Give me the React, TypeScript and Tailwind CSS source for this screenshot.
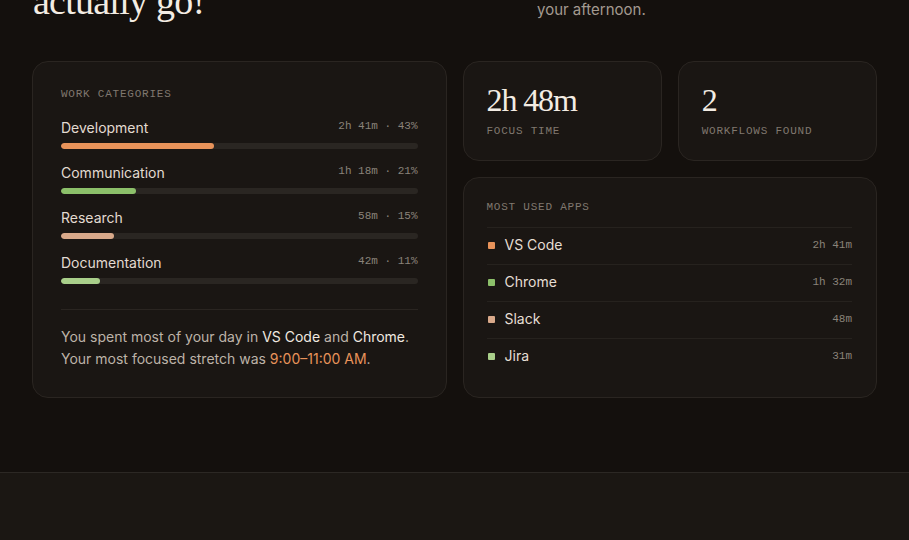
import React from "react";

const categories = [
  { name: "Development", time: "2h 41m · 43%", pct: 43, color: "bg-[#e8935a]" },
  { name: "Communication", time: "1h 18m · 21%", pct: 21, color: "bg-[#8cc06a]" },
  { name: "Research", time: "58m · 15%", pct: 15, color: "bg-[#d9a98a]" },
  { name: "Documentation", time: "42m · 11%", pct: 11, color: "bg-[#a9cf8a]" },
];

const apps = [
  { name: "VS Code", time: "2h 41m", color: "bg-[#e8935a]" },
  { name: "Chrome", time: "1h 32m", color: "bg-[#8cc06a]" },
  { name: "Slack", time: "48m", color: "bg-[#d9a98a]" },
  { name: "Jira", time: "31m", color: "bg-[#a9cf8a]" },
];

const sans = "font-['Inter','Noto_Sans',sans-serif]";
const mono = "font-['Liberation_Mono','DejaVu_Sans_Mono',monospace]";
const serif = "font-['Liberation_Serif','DejaVu_Serif',serif]";

function Label({ children }: { children: React.ReactNode }) {
  return (
    <div className={`${mono} text-[11px] leading-[12px] tracking-[0.07em] uppercase text-[#80786f]`}>
      {children}
    </div>
  );
}

function Stat({ value, label }: { value: string; label: string }) {
  return (
    <div className="rounded-2xl border border-[#2a2521] bg-[#1a1613] pl-[23px] pr-5 pt-5 pb-[23px]">
      <div className={`${serif} text-[32px] leading-[36px] tracking-[-0.035em] text-[#f3ece3]`}>{value}</div>
      <div className="mt-[7px]">
        <Label>{label}</Label>
      </div>
    </div>
  );
}

export default function App() {
  return (
    <div className={`min-h-screen h-[540px] overflow-hidden bg-[#14100d] flex flex-col ${sans}`}>
      <main className="px-8">
        <header className="-mt-[62px] flex items-end justify-between">
          <h1 className={`${serif} text-[38px] leading-[42px] tracking-[-0.02em] text-[#f3ece3] pl-px`}>
            Where did your hours
            <br />
            actually go!
          </h1>
          <p className="w-[340px] text-[15px] leading-[24px] text-[#a39a90]">
            A calm look back at how your focus moved through the morning and
            <br />
            your afternoon.
          </p>
        </header>

        <section className="mt-[39px] grid grid-cols-2 gap-4 items-stretch">
          <div className="rounded-2xl border border-[#2a2521] bg-[#1a1613] px-7 pt-[26px] pb-[27px]">
            <Label>Work categories</Label>
            <div className="mt-[18px] flex flex-col gap-[14px]">
              {categories.map((c) => (
                <div key={c.name}>
                  <div className="flex items-center justify-between h-5">
                    <span className="text-[14px] leading-5 text-[#e3dbd1]">{c.name}</span>
                    <span className={`${mono} text-[11px] leading-4 text-[#8a837a] -mt-1`}>{c.time}</span>
                  </div>
                  <div className="mt-[5px] h-[6px] rounded-full bg-[#2a2622] overflow-hidden">
                    <div className={`h-full rounded-full ${c.color}`} style={{ width: `${c.pct}%` }} />
                  </div>
                </div>
              ))}
            </div>
            <div className="mt-[25px] border-t border-[#2a2521] pt-[16px]">
              <p className="text-[14px] leading-[22px] text-[#bdb3a8]">
                You spent most of your day in <span className="text-[#f0e9e0]">VS Code</span> and{" "}
                <span className="text-[#f0e9e0]">Chrome</span>.
                <br />
                Your most focused stretch was <span className="text-[#e8935a]">9:00–11:00 AM</span>.
              </p>
            </div>
          </div>

          <div className="flex flex-col gap-4">
            <div className="grid grid-cols-2 gap-4">
              <Stat value="2h 48m" label="Focus time" />
              <Stat value="2" label="Workflows found" />
            </div>
            <div className="flex-1 rounded-2xl border border-[#2a2521] bg-[#1a1613] pl-[23px] pr-6 pt-[23px] pb-5">
              <Label>Most used apps</Label>
              <ul className="mt-[14px]">
                {apps.map((a) => (
                  <li key={a.name} className="flex items-center justify-between h-[37px] border-t border-[#26221e] pb-[2px]">
                    <div className="flex items-center gap-[10px] pl-px">
                      <span className={`w-[7px] h-[7px] rounded-[1px] ${a.color}`} />
                      <span className="text-[14px] leading-5 text-[#e6ded4]">{a.name}</span>
                    </div>
                    <span className={`${mono} text-[11px] leading-4 text-[#8a837a]`}>{a.time}</span>
                  </li>
                ))}
              </ul>
            </div>
          </div>
        </section>
      </main>

      <footer className="mt-[74px] flex-1 border-t border-[#2c2824] bg-[#1b1713]" />
    </div>
  );
}
